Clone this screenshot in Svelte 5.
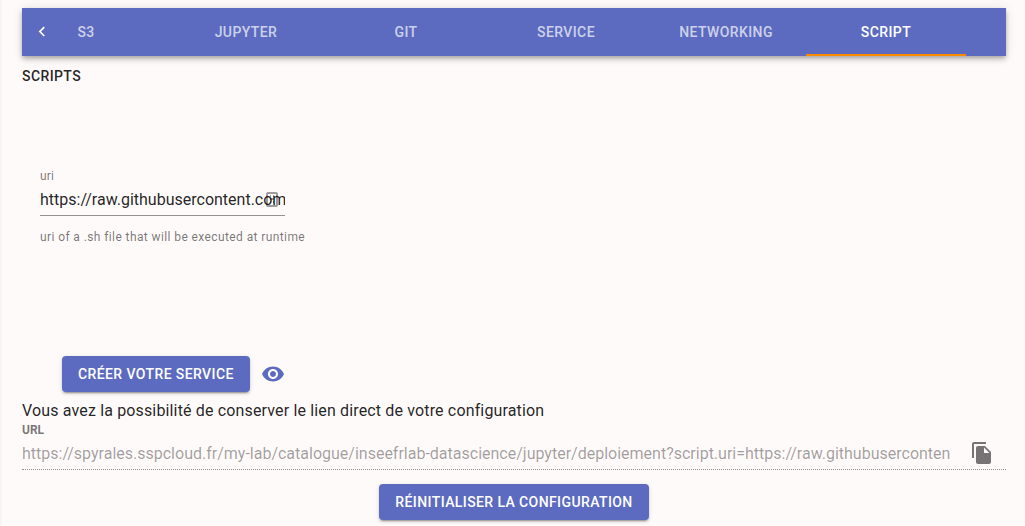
<script>
  const tabs = ['S3', 'Jupyter', 'Git', 'Service', 'Networking', 'Script'];
  let selected = $state('Script');
  let uri = $state('https://raw.githubusercontent.com/');
  const link =
    'https://spyrales.sspcloud.fr/my-lab/catalogue/inseefrlab-datascience/jupyter/deploiement?script.uri=https://raw.githubusercontent.com/';
</script>

<main>
  <nav class="bar">
    <button class="scroll" aria-label="Previous tabs">
      <svg viewBox="0 0 24 24" width="20" height="20"><path d="M15.41 16.09l-4.58-4.59 4.58-4.59L14 5.5l-6 6 6 6z" /></svg>
    </button>
    <div class="tabs" role="tablist">
      {#each tabs as tab}
        <button class="tab" class:active={tab === selected} role="tab" aria-selected={tab === selected} onclick={() => (selected = tab)}>{tab}</button>
      {/each}
    </div>
  </nav>

  <h2>Scripts</h2>

  <section class="field">
    <label for="uri">uri</label>
    <div class="entry">
      <input id="uri" type="text" aria-describedby="uri-help" bind:value={uri} />
      <svg class="badge" viewBox="0 0 12 15" width="12" height="15" aria-hidden="true">
        <rect x="1" y="1" width="10" height="13" rx="1" />
        <path d="M4 4h1M7 4h1M4 7h4M4 10h1M7 10h1" />
      </svg>
    </div>
    <p id="uri-help">uri of a .sh file that will be executed at runtime</p>
  </section>

  <div class="actions">
    <button class="contained">Créer votre service</button>
    <button class="icon eye" aria-label="Aperçu">
      <svg viewBox="0 0 24 24" width="24" height="24"><path d="M12 4.5C7 4.5 2.73 7.61 1 12c1.73 4.39 6 7.5 11 7.5s9.27-3.11 11-7.5c-1.73-4.39-6-7.5-11-7.5zM12 17c-2.76 0-5-2.24-5-5s2.24-5 5-5 5 2.24 5 5-2.24 5-5 5zm0-8c-1.66 0-3 1.34-3 3s1.34 3 3 3 3-1.34 3-3-1.34-3-3-3z" /></svg>
    </button>
  </div>

  <p class="note">Vous avez la possibilité de conserver le lien direct de votre configuration</p>
  <label class="url-label" for="url">URL</label>
  <div class="url-row">
    <input id="url" type="text" value={link} disabled />
    <button class="icon copy" aria-label="Copier">
      <svg viewBox="0 0 24 24" width="24" height="24"><path d="M16 1H4c-1.100 0-2 .9-2 2v14h2V3h12V1zm-1 4l6 6v10c0 1.100-.9 2-2 2H7.990C6.890 23 6 22.100 6 21l.01-14c0-1.100.89-2 1.990-2h7zm-1 7h5.500L14 6.500V12z" /></svg>
    </button>
  </div>
  <div class="reset">
    <button class="contained">Réinitialiser la configuration</button>
  </div>
</main>

<style>
  :global(body) {
    background: #fffafa;
  }
  main {
    box-sizing: border-box;
    border-left: 2px solid #f5f5f5;
    padding: 8px 19px 5px 20px;
    font-family: Roboto, sans-serif;
    font-size: 16px;
    line-height: 24px;
    color: rgba(0, 0, 0, 0.87);
  }
  button,
  input {
    font-family: inherit;
    border: 0;
    padding: 0;
    background: none;
  }
  button {
    cursor: pointer;
  }
  svg {
    display: block;
    fill: currentColor;
  }
  p,
  h2 {
    margin: 0;
  }
  .bar {
    display: flex;
    height: 48px;
    padding-right: 40px;
    background: #5c6bc0;
    color: #fff;
    box-shadow:
      0 2px 4px -1px rgba(0, 0, 0, 0.2),
      0 4px 5px 0 rgba(0, 0, 0, 0.14),
      0 1px 10px 0 rgba(0, 0, 0, 0.12);
  }
  .scroll {
    flex: 0 0 40px;
    display: flex;
    align-items: center;
    justify-content: center;
    color: inherit;
  }
  .tabs {
    flex: 1;
    min-width: 0;
    display: flex;
    justify-content: flex-end;
    overflow: hidden;
  }
  .tab {
    flex: 0 0 160px;
    border-top: 2px solid transparent;
    border-bottom: 2px solid transparent;
    font-size: 14px;
    font-weight: 500;
    letter-spacing: 0.02857em;
    text-transform: uppercase;
    color: rgba(255, 255, 255, 0.7);
  }
  .tab.active {
    color: #fff;
    border-bottom-color: #fb8c00;
  }
  h2 {
    padding-top: 8px;
    font-size: 14px;
    font-weight: 500;
    letter-spacing: 0.02857em;
    text-transform: uppercase;
  }
  .field {
    padding: 80px 18px 0;
  }
  .field label {
    display: block;
    font-size: 12px;
    line-height: 16px;
    letter-spacing: 0.00938em;
    color: rgba(0, 0, 0, 0.54);
  }
  .entry {
    position: relative;
    width: 245px;
  }
  .entry input {
    box-sizing: border-box;
    display: block;
    width: 100%;
    height: 32px;
    border-bottom: 1px solid rgba(0, 0, 0, 0.42);
    font-size: 16px;
    color: inherit;
  }
  .badge {
    position: absolute;
    right: 7px;
    top: 8px;
    fill: none;
    stroke: rgba(0, 0, 0, 0.38);
    stroke-width: 2;
    pointer-events: none;
  }
  .field p {
    padding-top: 11px;
    font-size: 12px;
    line-height: 20px;
    letter-spacing: 0.03333em;
    color: rgba(0, 0, 0, 0.54);
  }
  .actions {
    display: flex;
    align-items: center;
    gap: 11px;
    padding: 109px 40px 7px;
  }
  .contained {
    height: 36px;
    padding: 0 16px;
    border-radius: 4px;
    background: #5c6bc0;
    color: #fff;
    font-size: 14px;
    font-weight: 500;
    letter-spacing: 0.02857em;
    text-transform: uppercase;
    box-shadow:
      0 3px 1px -2px rgba(0, 0, 0, 0.2),
      0 2px 2px 0 rgba(0, 0, 0, 0.14),
      0 1px 5px 0 rgba(0, 0, 0, 0.12);
  }
  .eye {
    color: #5c6bc0;
  }
  .note {
    letter-spacing: 0.00938em;
  }
  .url-label {
    display: block;
    font-size: 12px;
    font-weight: 700;
    line-height: 14px;
    color: rgba(0, 0, 0, 0.54);
  }
  .url-row {
    display: flex;
    align-items: center;
    gap: 20px;
    padding-right: 12px;
    height: 32px;
    border-bottom: 1px dotted rgba(0, 0, 0, 0.42);
  }
  .url-row input {
    flex: 1;
    min-width: 0;
    font-size: 16px;
    color: rgba(0, 0, 0, 0.38);
  }
  .copy {
    color: rgba(0, 0, 0, 0.54);
  }
  .reset {
    display: flex;
    justify-content: center;
    padding-top: 14px;
  }
</style>
